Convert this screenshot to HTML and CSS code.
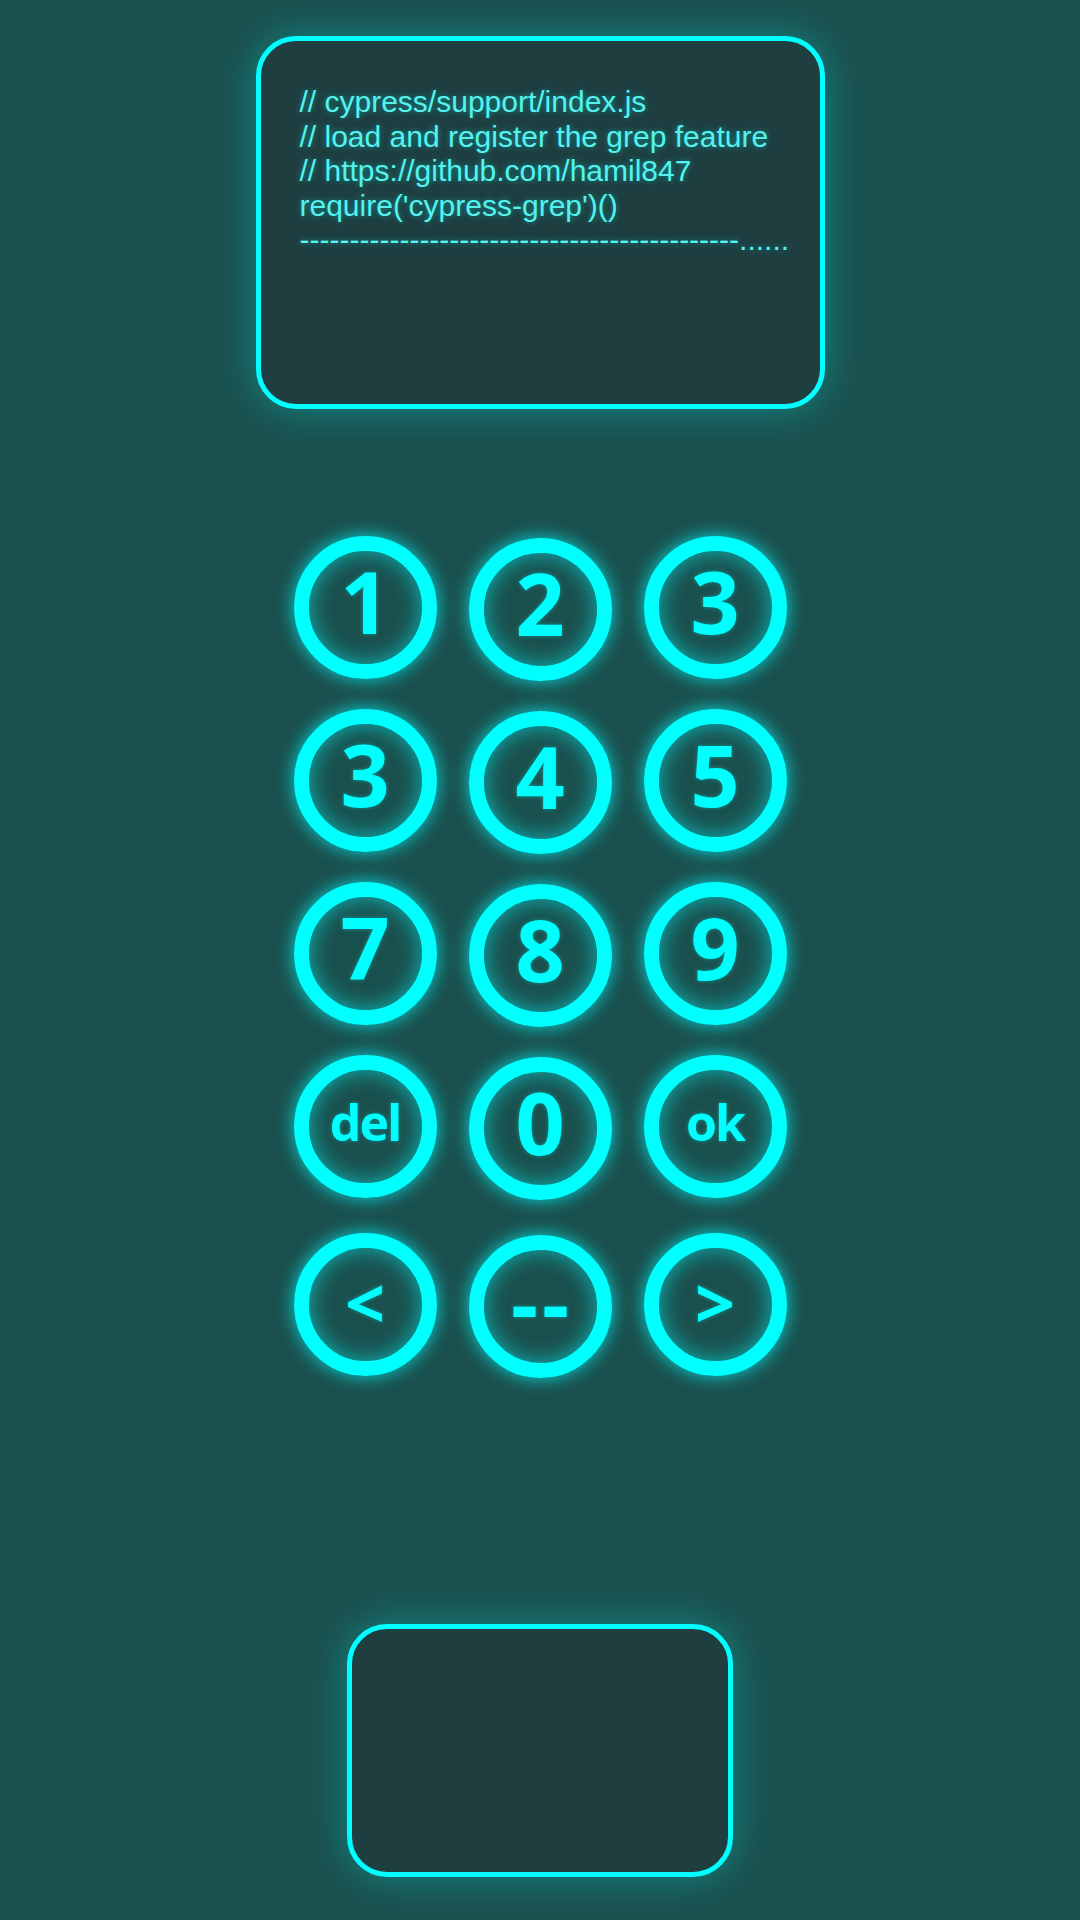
FILE: index.html
```html
<!DOCTYPE html>
<html lang="en">
<head>
<meta charset="utf-8">
<title>Keypad</title>
<link rel="stylesheet" href="styles.css">
</head>
<body>
<main class="page">
  <section class="screen">
    <div class="code">
      <div>// cypress/support/index.js</div>
      <div>// load and register the grep feature</div>
      <div>// https://github.com/hamil847</div>
      <div>require('cypress-grep')()</div>
      <div>--------------------------------------------......</div>
    </div>
  </section>

  <section class="keypad">
    <div class="row">
      <button class="key"><span class="num">1</span></button>
      <button class="key mid"><span class="num">2</span></button>
      <button class="key"><span class="num">3</span></button>
    </div>
    <div class="row">
      <button class="key"><span class="num">3</span></button>
      <button class="key mid"><span class="num">4</span></button>
      <button class="key"><span class="num">5</span></button>
    </div>
    <div class="row">
      <button class="key"><span class="num">7</span></button>
      <button class="key mid"><span class="num">8</span></button>
      <button class="key"><span class="num">9</span></button>
    </div>
    <div class="row">
      <button class="key"><span class="word">del</span></button>
      <button class="key mid"><span class="num">0</span></button>
      <button class="key"><span class="word">ok</span></button>
    </div>
    <div class="row last">
      <button class="key"><span class="sym">&lt;</span></button>
      <button class="key mid"><span class="dash">--</span></button>
      <button class="key"><span class="sym">&gt;</span></button>
    </div>
  </section>

  <section class="display"></section>
</main>
</body>
</html>
```

FILE: styles.css
```css
html, body {
  margin: 0;
  padding: 0;
  background: #1a504e;
}

.page {
  width: 1080px;
  height: 1920px;
  display: flex;
  flex-direction: column;
  align-items: center;
  box-sizing: border-box;
  padding-top: 36px;
  overflow: hidden;
}

.screen {
  width: 569px;
  height: 373px;
  box-sizing: border-box;
  border: 5px solid #00ffff;
  border-radius: 40px;
  background: #1e3e40;
  box-shadow: 0 0 40px rgba(0, 255, 255, 0.32);
  padding: 44px 20px 0 39px;
  overflow: hidden;
}

.code {
  font-family: "Liberation Sans", Arial, sans-serif;
  font-size: 30px;
  line-height: 34.5px;
  color: #55f2ee;
  text-shadow: 0 0 6px rgba(0, 255, 255, 0.45);
  white-space: nowrap;
}

.keypad {
  margin-top: 127px;
  display: flex;
  flex-direction: column;
  gap: 30px;
}

.row {
  display: flex;
  gap: 32px;
}

.row.last {
  margin-top: 5px;
}

.key {
  width: 143px;
  height: 143px;
  box-sizing: border-box;
  border: 15px solid #00ffff;
  border-radius: 50%;
  background: transparent;
  padding: 0;
  margin: 0;
  display: flex;
  align-items: center;
  justify-content: center;
  box-shadow: 0 0 18px rgba(0, 255, 255, 0.8), inset 0 0 22px rgba(0, 255, 255, 0.6);
  color: #00ffff;
  font-family: "Open Sans", "Noto Sans", sans-serif;
  font-weight: 700;
  text-shadow: 0 0 4px rgba(0, 255, 255, 0.4);
}

.key.mid {
  transform: translateY(2px);
}

.num {
  font-size: 86px;
  line-height: 1;
  margin-top: -14px;
}

.word {
  font-size: 50px;
  line-height: 1;
  margin-top: -10px;
  letter-spacing: -2px;
}

.sym {
  font-size: 70px;
  line-height: 1;
  margin-top: -6px;
}

.dash {
  font-size: 84px;
  line-height: 1;
  letter-spacing: 4px;
  margin-top: -8px;
  margin-right: -4px;
}

.display {
  margin-top: 248px;
  width: 386px;
  height: 253px;
  box-sizing: border-box;
  border: 5px solid #00ffff;
  border-radius: 40px;
  background: #1e3e40;
  box-shadow: 0 0 40px rgba(0, 255, 255, 0.32);
}
```
